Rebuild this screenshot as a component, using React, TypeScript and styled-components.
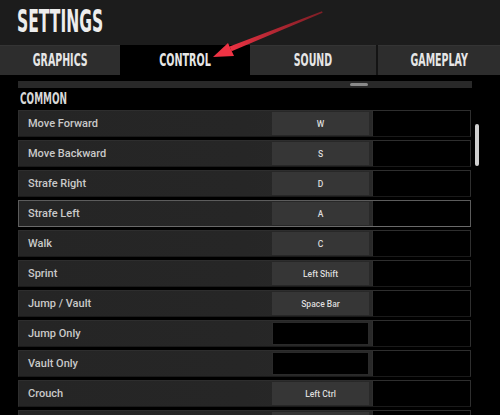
import React from 'react';
import styled, { createGlobalStyle } from 'styled-components';

const GlobalStyle = createGlobalStyle`
  html, body {
    margin: 0;
    padding: 0;
    background: #000;
  }
`;

const Screen = styled.div`
  position: relative;
  width: 500px;
  height: 415px;
  overflow: hidden;
  background: #000;
  font-family: Roboto, "Liberation Sans", sans-serif;
`;

const Header = styled.div`
  height: 45px;
  background: #1c1c1c;
  padding-left: 17px;
  display: flex;
  align-items: center;
`;

// tall narrow game font, squeezed from a narrow sans
const Condensed = styled.span<{ $size: number; $squeeze: number; $left?: boolean }>`
  display: inline-block;
  font-family: "Liberation Sans Narrow", "DejaVu Sans Condensed", "Liberation Sans", sans-serif;
  font-weight: bold;
  font-size: ${p => p.$size}px;
  line-height: 1;
  color: #e6e6e6;
  transform: scaleX(${p => p.$squeeze});
  transform-origin: ${p => (p.$left ? 'left center' : 'center')};
  white-space: nowrap;
`;

const Title = styled(Condensed)`
  margin-top: -3px;
  color: #ededed;
`;

const Tabs = styled.div`
  display: flex;
  height: 30px;
  background: #000;
`;

const Tab = styled.div<{ $width: number; $active?: boolean }>`
  width: ${p => p.$width}px;
  display: flex;
  align-items: center;
  justify-content: center;
  background: ${p => (p.$active ? '#000' : '#2d2d2d')};
  border-top: 1px solid ${p => (p.$active ? '#000' : '#343434')};
  box-sizing: border-box;
`;

const TabGap = styled.div`
  width: 2px;
  background: #141414;
`;

const Content = styled.div`
  padding: 6px 0 0 18px;
`;

const HScroll = styled.div`
  width: 454px;
  height: 7px;
  background: #292929;
  display: flex;
  align-items: center;
  padding-left: 332px;
  box-sizing: border-box;
`;

const HThumb = styled.div`
  width: 18px;
  height: 3px;
  border-radius: 2px;
  background: #8a8a8a;
`;

const SectionTitle = styled.div`
  height: 22px;
  display: flex;
  align-items: center;
  padding-left: 2px;
`;

const ListArea = styled.div`
  display: flex;
  align-items: flex-start;
`;

const List = styled.div`
  width: 453px;
  display: flex;
  flex-direction: column;
  gap: 3px;
`;

const Row = styled.div<{ $selected?: boolean }>`
  height: 27px;
  flex-shrink: 0;
  display: flex;
  align-items: stretch;
  box-sizing: border-box;
  background: linear-gradient(90deg, #252525 0%, #262626 50%, #2b2b2b 100%);
  border: 1px solid ${p => (p.$selected ? '#5c5c5c' : '#2e2e2e')};
  border-bottom-color: ${p => (p.$selected ? '#6a6a6a' : '#1a1a1a')};
`;

const Label = styled.div`
  flex: 1;
  display: flex;
  align-items: center;
  padding-left: 9px;
  font-size: 11px;
  font-weight: 500;
  color: #c9c9c9;
`;

const KeyCell = styled.div<{ $empty?: boolean }>`
  width: 97px;
  margin: 1px 0;
  display: flex;
  align-items: center;
  justify-content: center;
  box-sizing: border-box;
  background: ${p => (p.$empty ? '#000' : '#363636')};
  border: 1px solid ${p => (p.$empty ? '#2a2a2a' : '#363636')};
  font-size: 8.5px;
  font-weight: 500;
  color: #dcdcdc;
`;

const AltCell = styled.div`
  width: 97px;
  margin-left: 3px;
  background: #000;
  border-left: 1px solid #2e2e2e;
`;

const VScroll = styled.div`
  width: 4px;
  height: 42px;
  margin: 14px 0 0 4px;
  border-radius: 2px;
  background: #cfcfcf;
`;

const Arrow = styled.svg`
  position: absolute;
  left: 0;
  top: 0;
  pointer-events: none;
`;

type Binding = { name: string; key?: string; selected?: boolean; hidden?: boolean };

const bindings: Binding[] = [
  { name: 'Move Forward', key: 'W' },
  { name: 'Move Backward', key: 'S' },
  { name: 'Strafe Right', key: 'D' },
  { name: 'Strafe Left', key: 'A', selected: true },
  { name: 'Walk', key: 'C' },
  { name: 'Sprint', key: 'Left Shift' },
  { name: 'Jump / Vault', key: 'Space Bar' },
  { name: 'Jump Only' },
  { name: 'Vault Only' },
  { name: 'Crouch', key: 'Left Ctrl' },
  // scrolled past the bottom edge: only the top of the row shows
  { name: '', key: ' ', hidden: true },
];

export default function App() {
  return (
    <Screen>
      <GlobalStyle />
      <Header>
        <Title $size={32} $squeeze={0.54} $left>SETTINGS</Title>
      </Header>
      <Tabs>
        <Tab $width={120}><Condensed $size={17} $squeeze={0.62}>GRAPHICS</Condensed></Tab>
        <Tab $width={130} $active><Condensed $size={17} $squeeze={0.63}>CONTROL</Condensed></Tab>
        <Tab $width={126}><Condensed $size={17} $squeeze={0.62}>SOUND</Condensed></Tab>
        <TabGap />
        <Tab $width={122}><Condensed $size={17} $squeeze={0.62}>GAMEPLAY</Condensed></Tab>
      </Tabs>
      <Content>
        <HScroll><HThumb /></HScroll>
        <SectionTitle>
          <Condensed $size={16} $squeeze={0.62} $left style={{ color: '#d8d8d8' }}>COMMON</Condensed>
        </SectionTitle>
        <ListArea>
          <List>
            {bindings.map((b, i) => (
              <Row key={i} $selected={b.selected}>
                <Label>{b.name}</Label>
                <KeyCell $empty={!b.key}>{b.hidden ? null : b.key}</KeyCell>
                <AltCell />
              </Row>
            ))}
          </List>
          <VScroll />
        </ListArea>
      </Content>
      <Arrow width="500" height="80" viewBox="0 0 500 80">
        <defs>
          <linearGradient id="shaft" x1="322" y1="12" x2="228" y2="50" gradientUnits="userSpaceOnUse">
            <stop offset="0" stopColor="#c0202c" stopOpacity="0.6" />
            <stop offset="1" stopColor="#ef3344" />
          </linearGradient>
        </defs>
        <polygon points="322,11.3 322.6,12.7 231.6,51.2 229.6,46.4" fill="url(#shaft)" />
        <polygon points="213,57 228,43 234,56" fill="#ef3344" />
      </Arrow>
    </Screen>
  );
}
